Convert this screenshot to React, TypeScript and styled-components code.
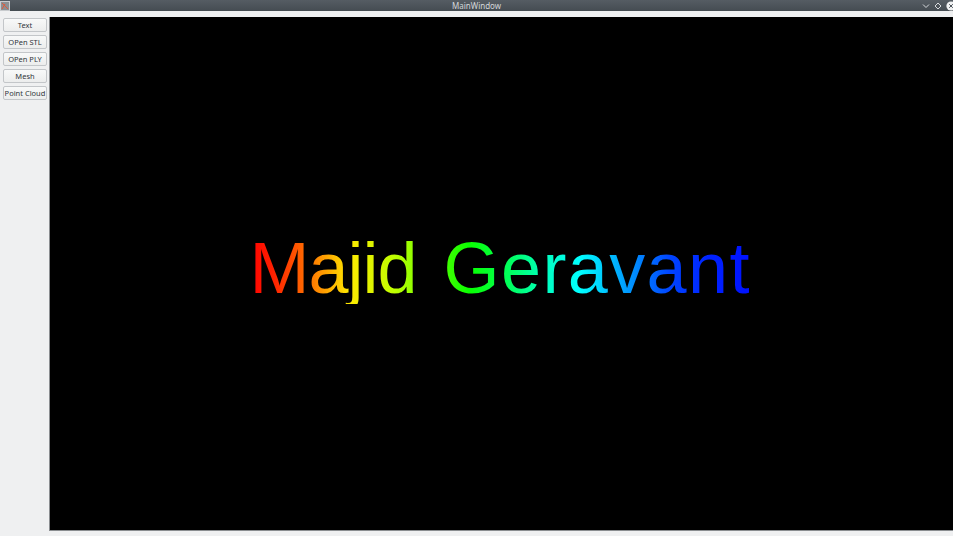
import React from "react";
import styled, { createGlobalStyle } from "styled-components";

const Global = createGlobalStyle`
  html, body { margin: 0; padding: 0; background: #eff0f1; overflow: hidden; }
  #root { width: 953px; height: 536px; }
`;

const Window = styled.div`
  width: 953px;
  height: 536px;
  display: flex;
  flex-direction: column;
  background: #eff0f1;
  font-family: "Noto Sans", "DejaVu Sans", sans-serif;
`;

const TitleBar = styled.div`
  height: 11px;
  flex: 0 0 11px;
  display: grid;
  grid-template-columns: 1fr auto 1fr;
  align-items: center;
  background: linear-gradient(#555c63, #454c52);
  color: #d4d7da;
  font-size: 8px;
  line-height: 11px;
`;

const TitleLeft = styled.div`
  display: flex;
  align-items: center;
  height: 11px;
`;

const TitleText = styled.div`
  text-align: center;
`;

const TitleRight = styled.div`
  display: flex;
  justify-content: flex-end;
  align-items: center;
  gap: 4px;
  height: 11px;
`;

const Body = styled.div`
  flex: 1;
  display: flex;
  padding-top: 6px;
  padding-bottom: 5px;
  min-height: 0;
`;

const Sidebar = styled.div`
  width: 44px;
  flex: 0 0 44px;
  padding: 1px 2px 0 3px;
  display: flex;
  flex-direction: column;
  gap: 3px;
`;

const Button = styled.button`
  height: 14px;
  width: 44px;
  padding: 0;
  margin: 0;
  box-sizing: border-box;
  border: 1px solid #c3c6c9;
  border-radius: 2px;
  background: linear-gradient(#f8f9f9, #eceded);
  color: #31363b;
  font-family: "Noto Sans", "DejaVu Sans", sans-serif;
  font-size: 7.5px;
  line-height: 12px;
  white-space: nowrap;
  text-align: center;
`;

const Viewport = styled.div`
  flex: 1;
  background: #000;
  border-left: 1px solid #8a8d90;
  border-bottom: 1px solid #8a8d90;
  display: flex;
  align-items: center;
  justify-content: center;
`;

const Rainbow = styled.div`
  font-family: "Liberation Sans", Arial, sans-serif;
  font-size: 72px;
  line-height: 1;
  white-space: nowrap;
  margin-top: -12px;
  margin-left: -4px;
  display: flex;
  gap: 26px;
  color: transparent;
  background: linear-gradient(
    90deg,
    hsl(0, 100%, 50%) 0%,
    hsl(8, 100%, 50%) 5%,
    hsl(30, 100%, 50%) 13%,
    hsl(55, 100%, 50%) 20%,
    hsl(75, 100%, 50%) 29%,
    hsl(118, 100%, 50%) 44%,
    hsl(142, 100%, 50%) 52%,
    hsl(165, 100%, 50%) 59%,
    hsl(180, 100%, 50%) 66%,
    hsl(200, 100%, 50%) 74%,
    hsl(224, 100%, 50%) 84%,
    hsl(232, 100%, 50%) 92%,
    hsl(236, 100%, 50%) 100%
  );
  -webkit-background-clip: text;
  background-clip: text;
`;

const Word = styled.span<{ $spacing: number }>`
  letter-spacing: ${(p) => p.$spacing}px;
  margin-right: ${(p) => -p.$spacing}px;
`;

const buttons = ["Text", "OPen STL", "OPen PLY", "Mesh", "Point Cloud"];

export default function App() {
  return (
    <>
      <Global />
      <Window>
        <TitleBar>
          <TitleLeft>
            <svg width="10" height="10" viewBox="0 0 10 10">
              <rect x="0.5" y="0.5" width="9" height="9" fill="#8c9094" stroke="#c8cbce" />
              <path d="M2 2 L8 8 M2 8 L5 3" stroke="#e05a3a" strokeWidth="1" fill="none" />
            </svg>
          </TitleLeft>
          <TitleText>MainWindow</TitleText>
          <TitleRight>
            <svg width="8" height="8" viewBox="0 0 8 8">
              <path d="M1 2.5 L4 5.5 L7 2.5" stroke="#d6d9dc" strokeWidth="1" fill="none" />
            </svg>
            <svg width="8" height="8" viewBox="0 0 8 8">
              <path d="M4 1 L7 4 L4 7 L1 4 Z" stroke="#d6d9dc" strokeWidth="1" fill="none" />
            </svg>
            <svg width="7" height="10" viewBox="0 0 7 10">
              <circle cx="5" cy="5" r="4.6" fill="#f0f1f2" />
              <path d="M3.2 3.2 L6.8 6.8 M6.8 3.2 L3.2 6.8" stroke="#4a5157" strokeWidth="1" />
            </svg>
          </TitleRight>
        </TitleBar>
        <Body>
          <Sidebar>
            {buttons.map((b) => (
              <Button key={b}>{b}</Button>
            ))}
          </Sidebar>
          <Viewport>
            <Rainbow>
              <Word $spacing={-1}>Majid</Word>
              <Word $spacing={1.4}>Geravant</Word>
            </Rainbow>
          </Viewport>
        </Body>
      </Window>
    </>
  );
}
